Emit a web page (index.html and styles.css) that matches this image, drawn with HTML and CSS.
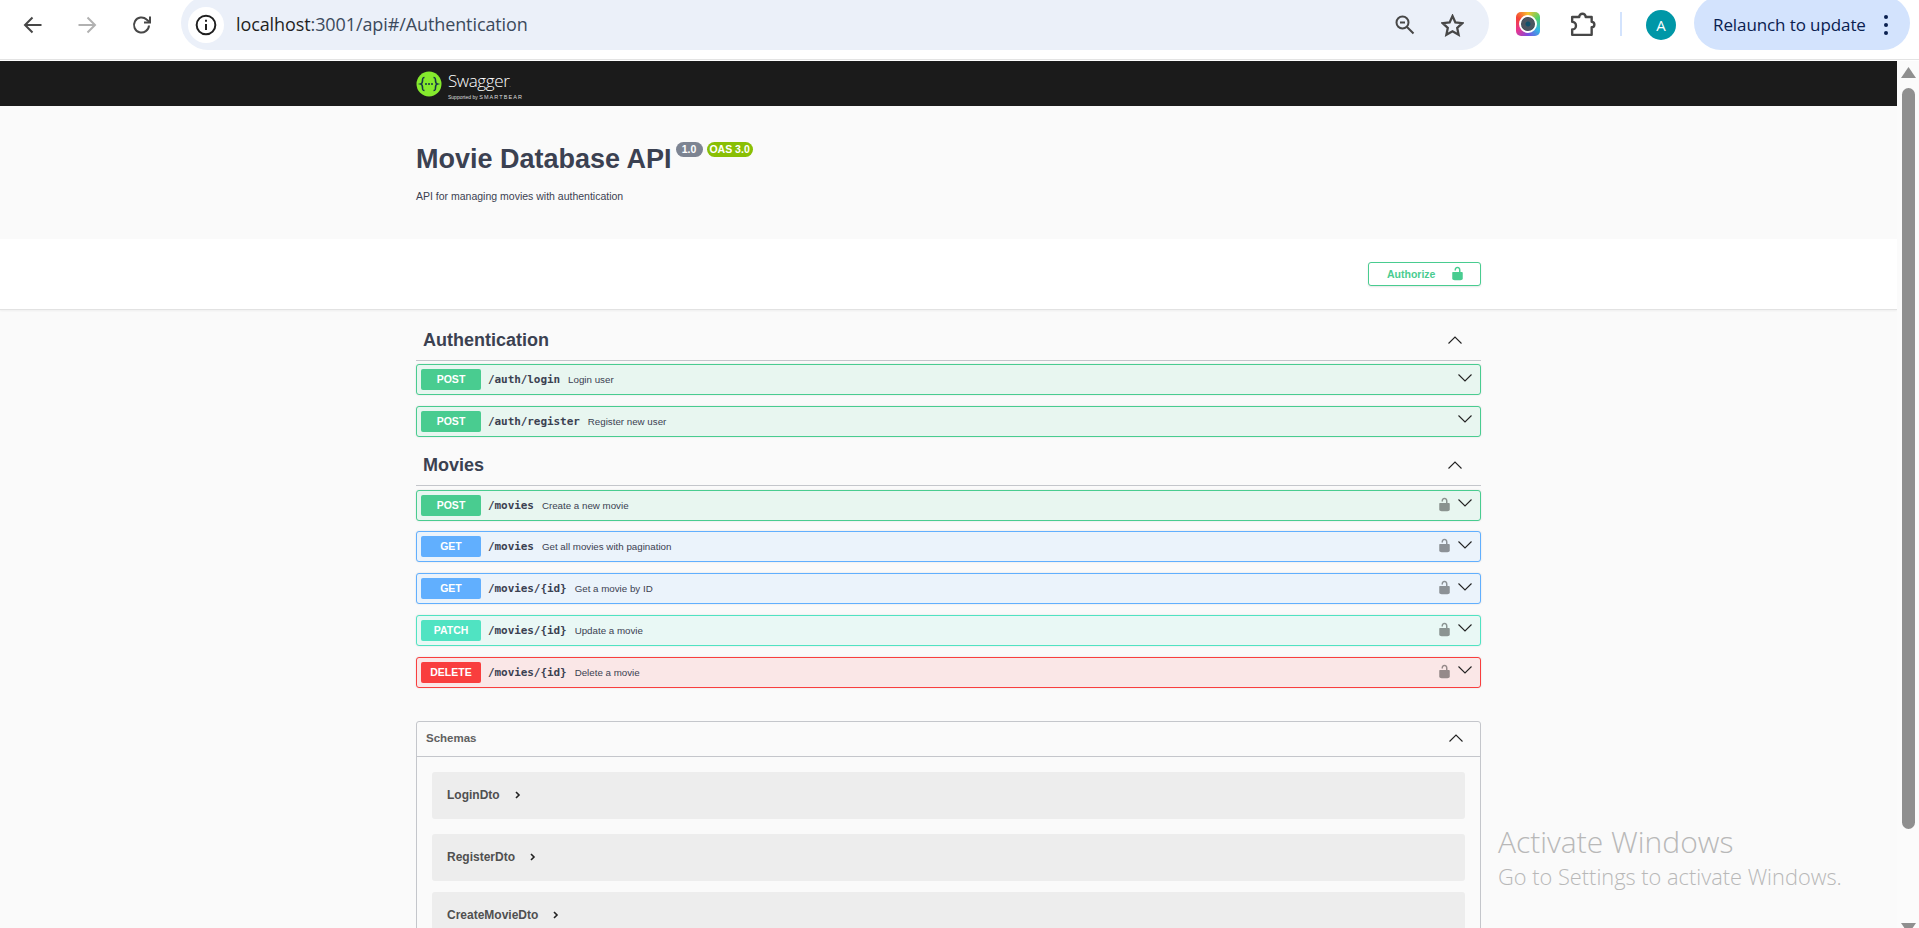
FILE: index.html
```html
<!DOCTYPE html>
<html lang="en">
<head>
  <meta charset="UTF-8" />
  <meta name="viewport" content="width=device-width, initial-scale=1.0" />
  <title>Swagger UI</title>
  <link rel="stylesheet" href="styles.css">
</head>
<body>
  <!-- browser toolbar -->
  <header class="toolbar">
    <svg class="tb-icon back" viewBox="0 0 20 20"><path d="M18.5 10H2M9.5 2.5 2 10l7.5 7.5"/></svg>
    <svg class="tb-icon forward" viewBox="0 0 20 20"><path d="M1.500 10H18M10.500 2.500 18 10l-7.500 7.500"/></svg>
    <svg class="tb-icon reload" viewBox="0 0 20 20"><path d="M17 10.500A7.500 7.500 0 1 1 14.600 4.500L17.500 7"/><path d="M18 1.500V7.500H12" /></svg>
    <div class="omnibox">
      <span class="site-info">
        <svg viewBox="0 0 20 20"><circle cx="10" cy="10" r="8.500"/><path d="M10 9v5.500M10 5.200v1.800"/></svg>
      </span>
      <span class="url"><b>localhost</b>:3001/api#/Authentication</span>
      <svg class="tb-icon zoom-out" viewBox="0 0 20 20"><circle cx="7.500" cy="7.500" r="6"/><path d="M12 12l6.500 6.500M5 7.500h5"/></svg>
      <svg class="tb-icon star" viewBox="0 0 20 20"><path d="M10 1.800l2.500 5.500 6 .7-4.400 4.100 1.200 5.900-5.300-3-5.300 3 1.200-5.900L1.500 8l6-.7z"/></svg>
    </div>
    <span class="ext-camera"><span class="lens"></span></span>
    <svg class="tb-icon puzzle" viewBox="0 0 24 24"><path d="M2 5.500h6.500a3 3 0 0 1 6 0H20V10a2.500 2.500 0 0 1 0 5v7H2v-5a3.500 3.500 0 0 0 0-7z" stroke-linejoin="round"/></svg>
    <span class="tb-divider"></span>
    <span class="avatar">A</span>
    <div class="relaunch">
      <span class="relaunch-text">Relaunch to update</span>
      <span class="dots"><i></i><i></i><i></i></span>
    </div>
  </header>

  <div class="viewport">
    <main class="page">
      <div class="topbar">
        <div class="wrapper logo">
          <svg class="logo-mark" viewBox="0 0 26 26">
            <circle cx="13" cy="13" r="12.500" fill="#85ea2d"/>
            <path d="M8.500 6.500c-2 0-2 1-2 3s0 3-1.800 3.500c1.800.5 1.800 1.500 1.800 3.500s0 3 2 3M17.500 6.500c2 0 2 1 2 3s0 3 1.800 3.500c-1.800.5-1.800 1.500-1.800 3.500s0 3-2 3" fill="none" stroke="#173647" stroke-width="1.600"/>
            <circle cx="10" cy="13" r="1" fill="#173647"/><circle cx="13" cy="13" r="1" fill="#173647"/><circle cx="16" cy="13" r="1" fill="#173647"/>
          </svg>
          <div class="logo-text">
            <span class="logo-name">Swagger<small>.</small></span>
            <span class="logo-sub">Supported by <b>SMARTBEAR</b></span>
          </div>
        </div>
      </div>

      <section class="info wrapper">
        <h2 class="title">Movie Database API
          <span class="badge version">1.0</span>
          <span class="badge oas">OAS 3.0</span>
        </h2>
        <p class="desc">API for managing movies with authentication</p>
      </section>

      <section class="scheme">
        <div class="wrapper scheme-inner">
          <button class="authorize">Authorize
            <svg viewBox="0 0 20 20"><path d="M15.800 8H14V5.600C14 2.703 12.665 1 10 1 7.334 1 6 2.703 6 5.600V6h2v-.801C8 3.754 8.797 3 10 3c1.203 0 2 .754 2 2.199V8H4c-.553 0-1 .646-1 1.199V17c0 .549.428 1.139.951 1.307l1.197.387C5.672 18.861 6.550 19 7.100 19h5.800c.549 0 1.428-.139 1.951-.307l1.196-.387c.524-.167.953-.757.953-1.306V9.199C17 8.646 16.352 8 15.800 8z"/></svg>
          </button>
        </div>
      </section>

      <section class="wrapper ops">
        <h3 class="tag">Authentication
          <svg class="chev" viewBox="0 0 14 8"><path d="M.5 7.500 7 1l6.500 6.500"/></svg>
        </h3>
        <div class="op post">
          <span class="method">POST</span><span class="path">/auth/login</span><span class="summary">Login user</span>
          <svg class="chev down" viewBox="0 0 14 8"><path d="M.5.500 7 7 13.500.500"/></svg>
        </div>
        <div class="op post">
          <span class="method">POST</span><span class="path">/auth/register</span><span class="summary">Register new user</span>
          <svg class="chev down" viewBox="0 0 14 8"><path d="M.5.500 7 7 13.500.500"/></svg>
        </div>

        <h3 class="tag movies">Movies
          <svg class="chev" viewBox="0 0 14 8"><path d="M.5 7.500 7 1l6.500 6.500"/></svg>
        </h3>
        <div class="op post">
          <span class="method">POST</span><span class="path">/movies</span><span class="summary">Create a new movie</span>
          <svg class="lock" viewBox="0 0 20 20"><path d="M15.800 8H14V5.600C14 2.703 12.665 1 10 1 7.334 1 6 2.703 6 5.600V6h2v-.801C8 3.754 8.797 3 10 3c1.203 0 2 .754 2 2.199V8H4c-.553 0-1 .646-1 1.199V17c0 .549.428 1.139.951 1.307l1.197.387C5.672 18.861 6.550 19 7.100 19h5.800c.549 0 1.428-.139 1.951-.307l1.196-.387c.524-.167.953-.757.953-1.306V9.199C17 8.646 16.352 8 15.800 8z"/></svg>
          <svg class="chev down" viewBox="0 0 14 8"><path d="M.5.500 7 7 13.500.500"/></svg>
        </div>
        <div class="op get">
          <span class="method">GET</span><span class="path">/movies</span><span class="summary">Get all movies with pagination</span>
          <svg class="lock" viewBox="0 0 20 20"><path d="M15.800 8H14V5.600C14 2.703 12.665 1 10 1 7.334 1 6 2.703 6 5.600V6h2v-.801C8 3.754 8.797 3 10 3c1.203 0 2 .754 2 2.199V8H4c-.553 0-1 .646-1 1.199V17c0 .549.428 1.139.951 1.307l1.197.387C5.672 18.861 6.550 19 7.100 19h5.800c.549 0 1.428-.139 1.951-.307l1.196-.387c.524-.167.953-.757.953-1.306V9.199C17 8.646 16.352 8 15.800 8z"/></svg>
          <svg class="chev down" viewBox="0 0 14 8"><path d="M.5.500 7 7 13.500.500"/></svg>
        </div>
        <div class="op get">
          <span class="method">GET</span><span class="path">/movies/{id}</span><span class="summary">Get a movie by ID</span>
          <svg class="lock" viewBox="0 0 20 20"><path d="M15.800 8H14V5.600C14 2.703 12.665 1 10 1 7.334 1 6 2.703 6 5.600V6h2v-.801C8 3.754 8.797 3 10 3c1.203 0 2 .754 2 2.199V8H4c-.553 0-1 .646-1 1.199V17c0 .549.428 1.139.951 1.307l1.197.387C5.672 18.861 6.550 19 7.100 19h5.800c.549 0 1.428-.139 1.951-.307l1.196-.387c.524-.167.953-.757.953-1.306V9.199C17 8.646 16.352 8 15.800 8z"/></svg>
          <svg class="chev down" viewBox="0 0 14 8"><path d="M.5.500 7 7 13.500.500"/></svg>
        </div>
        <div class="op patch">
          <span class="method">PATCH</span><span class="path">/movies/{id}</span><span class="summary">Update a movie</span>
          <svg class="lock" viewBox="0 0 20 20"><path d="M15.800 8H14V5.600C14 2.703 12.665 1 10 1 7.334 1 6 2.703 6 5.600V6h2v-.801C8 3.754 8.797 3 10 3c1.203 0 2 .754 2 2.199V8H4c-.553 0-1 .646-1 1.199V17c0 .549.428 1.139.951 1.307l1.197.387C5.672 18.861 6.550 19 7.100 19h5.800c.549 0 1.428-.139 1.951-.307l1.196-.387c.524-.167.953-.757.953-1.306V9.199C17 8.646 16.352 8 15.800 8z"/></svg>
          <svg class="chev down" viewBox="0 0 14 8"><path d="M.5.500 7 7 13.500.500"/></svg>
        </div>
        <div class="op delete">
          <span class="method">DELETE</span><span class="path">/movies/{id}</span><span class="summary">Delete a movie</span>
          <svg class="lock" viewBox="0 0 20 20"><path d="M15.800 8H14V5.600C14 2.703 12.665 1 10 1 7.334 1 6 2.703 6 5.600V6h2v-.801C8 3.754 8.797 3 10 3c1.203 0 2 .754 2 2.199V8H4c-.553 0-1 .646-1 1.199V17c0 .549.428 1.139.951 1.307l1.197.387C5.672 18.861 6.550 19 7.100 19h5.800c.549 0 1.428-.139 1.951-.307l1.196-.387c.524-.167.953-.757.953-1.306V9.199C17 8.646 16.352 8 15.800 8z"/></svg>
          <svg class="chev down" viewBox="0 0 14 8"><path d="M.5.500 7 7 13.500.500"/></svg>
        </div>

        <div class="schemas">
          <div class="schemas-head">Schemas
            <svg class="chev" viewBox="0 0 14 8"><path d="M.5 7.500 7 1l6.500 6.500"/></svg>
          </div>
          <div class="schemas-body">
            <div class="model">LoginDto <svg class="arrow" viewBox="0 0 6 8"><path d="M1 1l3 3-3 3"/></svg></div>
            <div class="model">RegisterDto <svg class="arrow" viewBox="0 0 6 8"><path d="M1 1l3 3-3 3"/></svg></div>
            <div class="model">CreateMovieDto <svg class="arrow" viewBox="0 0 6 8"><path d="M1 1l3 3-3 3"/></svg></div>
          </div>
        </div>
      </section>
    </main>

    <aside class="scrollbar">
      <svg class="sb-arrow" viewBox="0 0 15 11"><path d="M7.500 0 15 11H0z"/></svg>
      <div class="sb-thumb"></div>
      <svg class="sb-arrow sb-down" viewBox="0 0 15 11"><path d="M0 0h15L7.500 11z"/></svg>
    </aside>
  </div>

  <div class="watermark">
    <div class="wm-title">Activate Windows</div>
    <div class="wm-sub">Go to Settings to activate Windows.</div>
  </div>
</body>
</html>
```

FILE: styles.css
```css
* { box-sizing: border-box; }
html, body { margin: 0; height: 928px; overflow: hidden; }
body { font-family: "Liberation Sans", Arial, sans-serif; color: #3b4151; background: #fafafa; position: relative; }

/* browser toolbar */
.toolbar { height: 61px; background: #fff; display: flex; align-items: flex-start; position: relative; overflow: hidden; }
.toolbar::after { content: ""; position: absolute; left: 0; right: 0; top: 59px; height: 1px; background: #e3e3e3; }
.tb-icon { fill: none; stroke: #474747; stroke-width: 2; flex: none; }
.back { width: 20px; height: 20px; margin: 15px 0 0 23px; }
.forward { width: 20px; height: 20px; margin: 15px 0 0 34px; stroke: #b1b1b1; }
.reload { width: 20px; height: 20px; margin: 15px 0 0 35px; }
.omnibox { width: 1308px; height: 54px; margin: -4px 0 0 29px; background: #ebf0f9; border-radius: 27px; display: flex; align-items: center; padding: 4px 0 0 7px; }
.site-info { width: 36px; height: 36px; border-radius: 50%; background: #fff; display: flex; align-items: center; justify-content: center; flex: none; }
.site-info svg { width: 22px; height: 22px; fill: none; stroke: #1f1f1f; stroke-width: 1.8; }
.url { font-family: "Open Sans", "Noto Sans", sans-serif; font-size: 18px; line-height: 22px; margin: -2px 0 0 12px; color: #3c4a5c; letter-spacing: -.1px; white-space: nowrap; }
.url b { font-weight: 400; color: #1f1f1f; }
.zoom-out { width: 20px; height: 20px; margin-left: auto; }
.star { width: 23px; height: 23px; margin: 0 25px 0 26px; }
.ext-camera { width: 24px; height: 24px; margin: 12px 0 0 27px; border-radius: 5px; background: conic-gradient(#f9c22e, #4fd16a, #33b5e5, #7b4be0, #e8358e, #f44336, #f9c22e); display: flex; align-items: center; justify-content: center; flex: none; }
.lens { width: 18px; height: 18px; border-radius: 50%; background: radial-gradient(circle, #12506b 0 2px, #4b5561 3px 6px, #333c47 7px); border: 2px solid #fff; }
.puzzle { width: 26px; height: 26px; margin: 11px 0 0 30px; stroke-width: 2.2; }
.tb-divider { width: 2px; height: 24px; margin: 12px 0 0 24px; background: #d3e3fd; flex: none; }
.avatar { width: 30px; height: 30px; margin: 10px 0 0 24px; border-radius: 50%; background: #0097a7; color: #fff; font-family: "Open Sans", sans-serif; font-size: 15px; display: flex; align-items: center; justify-content: center; flex: none; }
.relaunch { width: 216px; height: 54px; margin: -4px 0 0 18px; padding: 4px 0 0 19px; background: #d3e3fd; border-radius: 27px; display: flex; align-items: center; font-family: "Open Sans", "Noto Sans", sans-serif; font-size: 17px; color: #0a2050; white-space: nowrap; flex: none; }
.relaunch-text { margin-top: -2px; letter-spacing: -.1px; }
.dots { display: flex; flex-direction: column; gap: 4px; margin-left: auto; margin-right: 22px; }
.dots i { width: 4px; height: 4px; border-radius: 50%; background: #0a2050; display: block; }

/* page area */
.viewport { display: flex; height: 867px; overflow: hidden; }
.page { width: 1897px; flex: none; overflow: hidden; }
.wrapper { width: 1065px; margin: 0 auto; }

.topbar { background: #1b1b1b; height: 45px; }
.logo { display: flex; align-items: center; height: 45px; }
.logo-mark { width: 26px; height: 26px; flex: none; }
.logo-text { margin-left: 6px; padding-top: 5px; display: flex; flex-direction: column; color: #fff; }
.logo-name { font-family: "Open Sans", sans-serif; font-size: 17px; line-height: 18px; font-weight: 300; letter-spacing: -.4px; }
.logo-name small { font-size: 5px; }
.logo-sub { font-size: 5px; line-height: 7px; color: #ddd; white-space: nowrap; }
.logo-sub b { font-size: 5.5px; letter-spacing: 1.1px; font-weight: 400; }

.info { height: 133px; padding-top: 36px; }
.title { display: flex; align-items: flex-start; margin: 0; font-size: 27px; line-height: 34px; font-weight: 700; color: #3b4151; }
.badge { color: #fff; font-size: 10.5px; line-height: 15px; height: 15px; border-radius: 8px; text-align: center; font-weight: 700; }
.version { width: 27px; margin-left: 4px; background: #7d8492; }
.oas { width: 46px; margin-left: 4px; background: #89bf04; }
.desc { margin: 13px 0 0; font-size: 10.5px; line-height: 14px; }

.scheme { height: 71px; background: #fff; border-bottom: 1px solid #e2e2e2; box-shadow: 0 1px 2px rgba(0,0,0,.05); }
.scheme-inner { display: flex; justify-content: flex-end; padding-top: 23px; }
.authorize { width: 113px; height: 24px; padding: 0 15px 0 18px; border: 1px solid #49cc90; border-radius: 3px; background: #fff; color: #49cc90; font-family: inherit; font-size: 10.5px; font-weight: 700; display: flex; align-items: center; justify-content: space-between; box-shadow: 0 1px 2px rgba(0,0,0,.1); }
.authorize svg { width: 15px; height: 15px; margin-top: -2px; fill: #49cc90; }

.tag { display: flex; align-items: flex-end; justify-content: space-between; height: 51px; margin: 0 0 3px; padding: 0 19px 9px 7px; font-size: 18px; line-height: 21px; border-bottom: 1px solid #c4c6cb; color: #3b4151; }
.tag .chev { margin-bottom: 7px; }
.movies { height: 38px; margin-bottom: 4px; }
.chev { width: 14px; height: 8px; fill: none; stroke: #222; stroke-width: 1.1; flex: none; }

.op { display: flex; align-items: center; height: 31px; margin-bottom: 10.75px; padding-left: 4px; border: 1px solid; border-radius: 3px; box-shadow: 0 0 2px rgba(0,0,0,.12); }
.method { width: 60px; height: 21px; line-height: 21px; border-radius: 2px; color: #fff; text-align: center; font-size: 10.5px; font-weight: 700; flex: none; }
.path { margin-left: 7px; font-family: "DejaVu Sans Mono", monospace; font-size: 11px; font-weight: 700; letter-spacing: -.07px; color: #3b4151; }
.summary { margin-left: 8px; font-size: 9.75px; color: #3b4151; }
.lock { width: 15px; height: 15px; margin: -2px 0 0 auto; fill: #000; opacity: .4; flex: none; }
.down { margin: -4px 8px 0 6px; }
.op > .chev.down:nth-child(4) { margin-left: auto; }

.post { background: #e8f6f0; border-color: #49cc90; }
.post .method { background: #49cc90; }
.get { background: #ebf3fb; border-color: #61affe; }
.get .method { background: #61affe; }
.patch { background: #e9f8f5; border-color: #50e3c2; }
.patch .method { background: #50e3c2; }
.delete { background: #fae7e7; border-color: #f93e3e; }
.delete .method { background: #f93e3e; }

.schemas { margin-top: 33px; border: 1px solid #c4c6cb; border-radius: 3px 3px 0 0; }
.schemas-head { display: flex; align-items: center; justify-content: space-between; height: 35px; padding: 0 17px 1px 9px; font-size: 11.5px; font-weight: 700; color: #606060; border-bottom: 1px solid #c4c6cb; }
.schemas-body { padding: 15px 15px 0; }
.model { display: flex; align-items: center; height: 47px; margin-bottom: 15px; padding-left: 15px; border-radius: 3px; background: #ededed; font-size: 12px; font-weight: 700; color: #505050; }
.model:last-child { margin-top: -4px; }
.arrow { width: 6px; height: 8px; margin-left: 15px; fill: none; stroke: #222; stroke-width: 1.6; }

/* scrollbar */
.scrollbar { width: 22px; flex: none; padding: 6px 0 0 4px; background: #fbfbfb; }
.sb-arrow { display: block; width: 15px; height: 11px; fill: #8f8f8f; }
.sb-thumb { width: 13px; height: 741px; margin: 10px 0 0 1px; border-radius: 7px; background: #8f8f8f; }
.sb-down { margin-top: 94px; }

/* windows watermark */
.watermark { position: absolute; left: 1498px; top: 823px; font-family: "Open Sans", "Noto Sans", sans-serif; color: #b8b8b8; white-space: nowrap; font-weight: 300; }
.wm-title { font-size: 30px; line-height: 38px; }
.wm-sub { font-size: 21.8px; line-height: 32px; }
```
